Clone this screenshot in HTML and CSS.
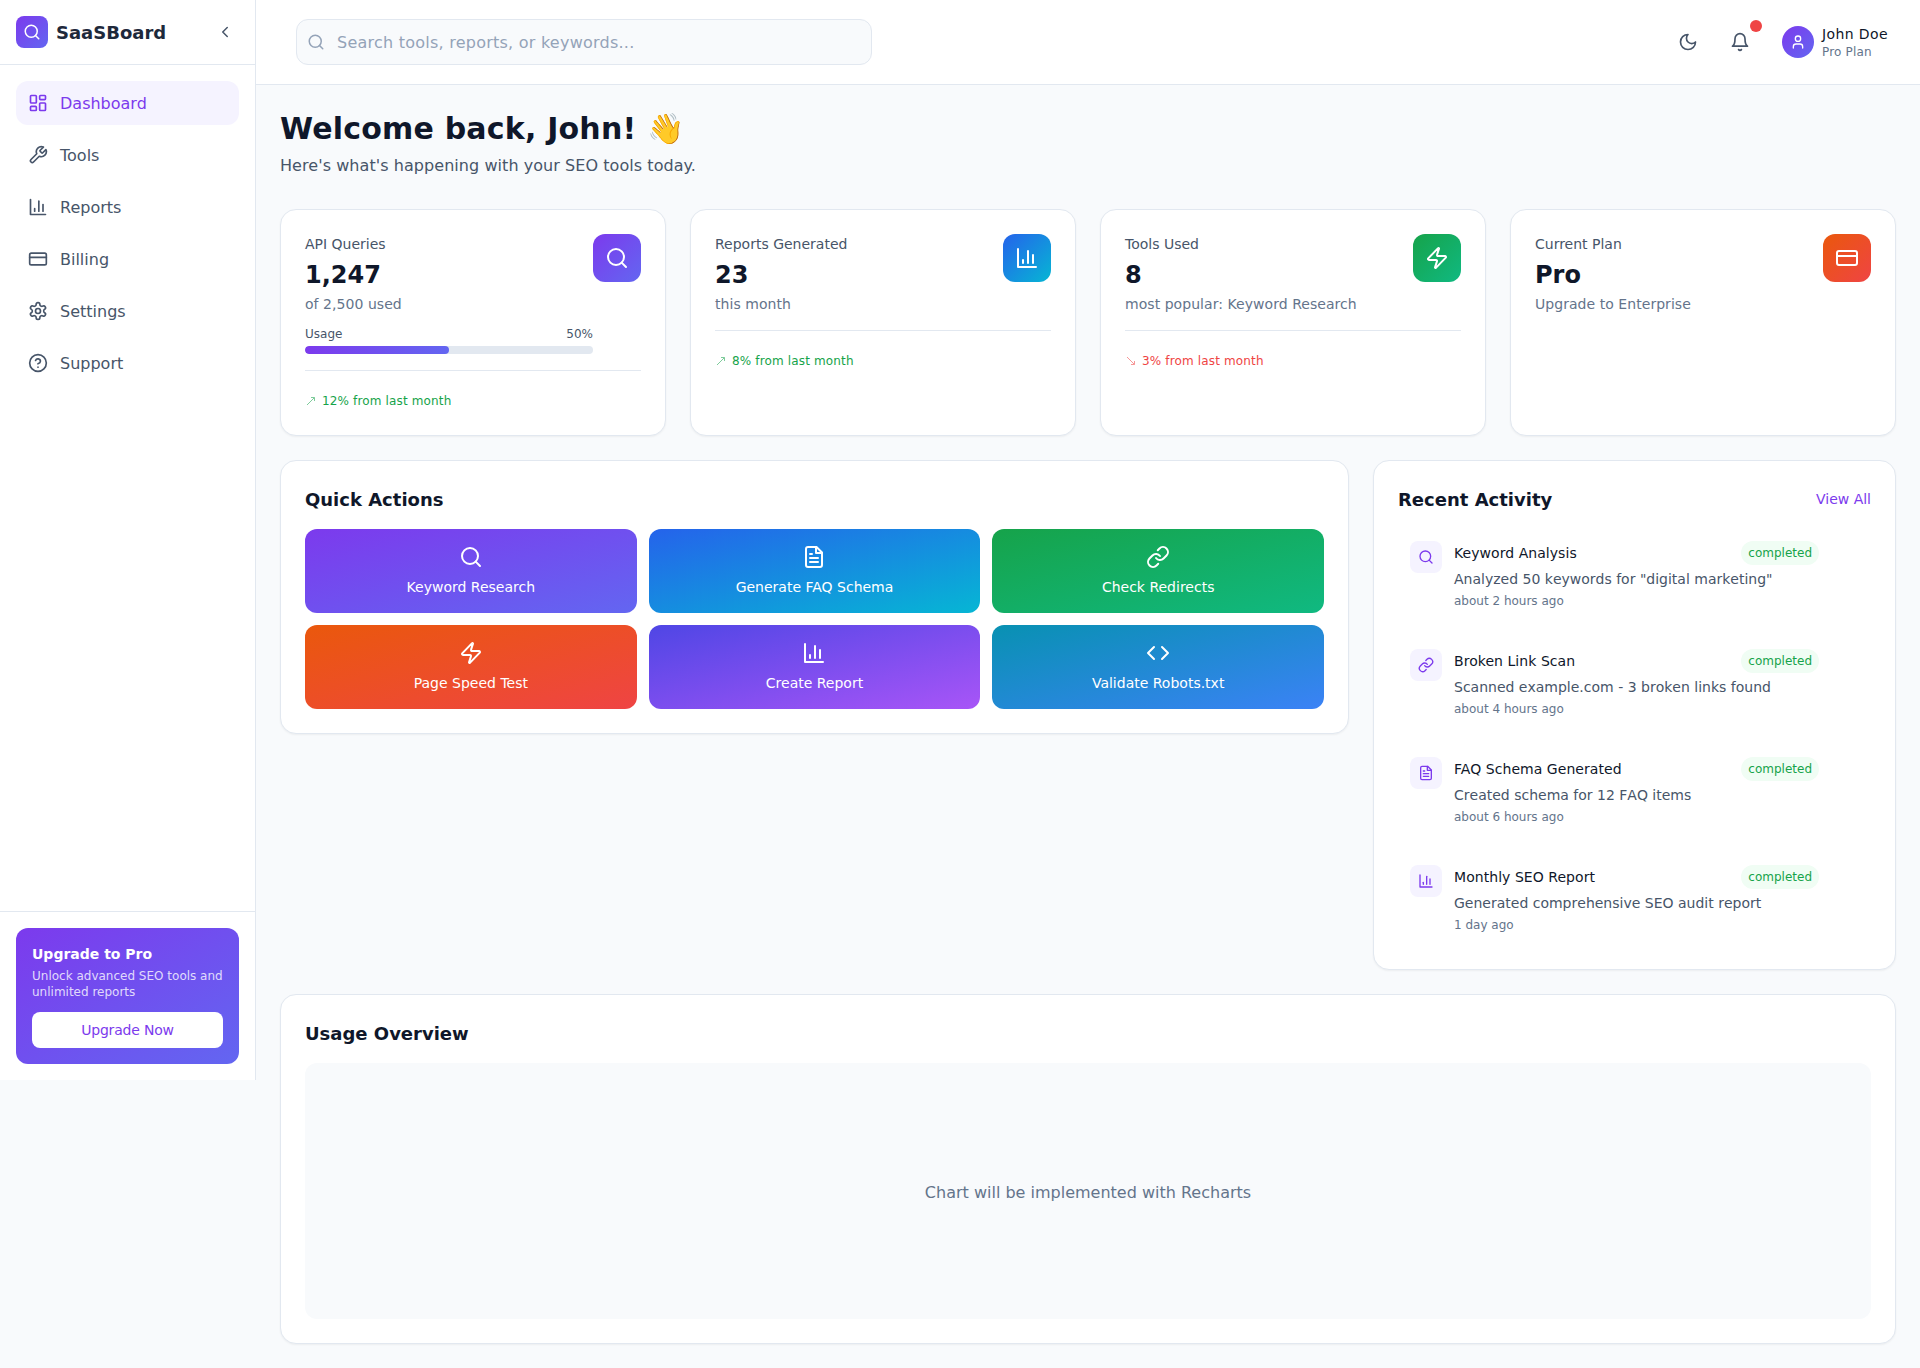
FILE: index.html
```html
<!DOCTYPE html>
<html lang="en">
<head>
    <meta charset="UTF-8">
    <title>SaaSBoard Dashboard</title>
    <link rel="stylesheet" href="styles.css">
</head>
<body>
    <svg class="sprite" xmlns="http://www.w3.org/2000/svg">
        <symbol id="i-search" viewBox="0 0 24 24"><circle cx="11" cy="11" r="8"/><path d="m21 21-4.35-4.35"/></symbol>
        <symbol id="i-chevron" viewBox="0 0 24 24"><path d="m15 18-6-6 6-6"/></symbol>
        <symbol id="i-dashboard" viewBox="0 0 24 24"><rect x="3" y="3" width="7" height="9" rx="1"/><rect x="14" y="3" width="7" height="5" rx="1"/><rect x="14" y="12" width="7" height="9" rx="1"/><rect x="3" y="16" width="7" height="5" rx="1"/></symbol>
        <symbol id="i-wrench" viewBox="0 0 24 24"><path d="M14.7 6.3a1 1 0 0 0 0 1.4l1.6 1.6a1 1 0 0 0 1.4 0l3.77-3.77a6 6 0 0 1-7.94 7.94l-6.91 6.91a2.12 2.12 0 0 1-3-3l6.91-6.91a6 6 0 0 1 7.94-7.94l-3.76 3.76z"/></symbol>
        <symbol id="i-chart" viewBox="0 0 24 24"><path d="M3 3v18h18"/><path d="M18 17V9"/><path d="M13 17V5"/><path d="M8 17v-3"/></symbol>
        <symbol id="i-card" viewBox="0 0 24 24"><rect x="2" y="5" width="20" height="14" rx="2"/><line x1="2" y1="10" x2="22" y2="10"/></symbol>
        <symbol id="i-settings" viewBox="0 0 24 24"><path d="M12.22 2h-.44a2 2 0 0 0-2 2v.18a2 2 0 0 1-1 1.73l-.43.25a2 2 0 0 1-2 0l-.15-.08a2 2 0 0 0-2.73.73l-.22.38a2 2 0 0 0 .73 2.73l.15.1a2 2 0 0 1 1 1.72v.51a2 2 0 0 1-1 1.74l-.15.09a2 2 0 0 0-.73 2.73l.22.38a2 2 0 0 0 2.73.73l.15-.08a2 2 0 0 1 2 0l.43.25a2 2 0 0 1 1 1.73V20a2 2 0 0 0 2 2h.44a2 2 0 0 0 2-2v-.18a2 2 0 0 1 1-1.73l.43-.25a2 2 0 0 1 2 0l.15.08a2 2 0 0 0 2.73-.73l.22-.39a2 2 0 0 0-.73-2.73l-.15-.08a2 2 0 0 1-1-1.74v-.5a2 2 0 0 1 1-1.74l.15-.09a2 2 0 0 0 .73-2.73l-.22-.38a2 2 0 0 0-2.73-.73l-.15.08a2 2 0 0 1-2 0l-.43-.25a2 2 0 0 1-1-1.73V4a2 2 0 0 0-2-2z"/><circle cx="12" cy="12" r="3"/></symbol>
        <symbol id="i-help" viewBox="0 0 24 24"><circle cx="12" cy="12" r="10"/><path d="M9.09 9a3 3 0 0 1 5.83 1c0 2-3 3-3 3"/><path d="M12 17h.01"/></symbol>
        <symbol id="i-moon" viewBox="0 0 24 24"><path d="M12 3a6 6 0 0 0 9 9 9 9 0 1 1-9-9Z"/></symbol>
        <symbol id="i-bell" viewBox="0 0 24 24"><path d="M6 8a6 6 0 0 1 12 0c0 7 3 9 3 9H3s3-2 3-9"/><path d="M10.3 21a1.94 1.94 0 0 0 3.4 0"/></symbol>
        <symbol id="i-user" viewBox="0 0 24 24"><path d="M19 21v-2a4 4 0 0 0-4-4H9a4 4 0 0 0-4 4v2"/><circle cx="12" cy="7" r="4"/></symbol>
        <symbol id="i-zap" viewBox="0 0 24 24"><path d="M4 14a1 1 0 0 1-.78-1.63l9.9-10.2a.5.5 0 0 1 .86.46l-1.92 6.02A1 1 0 0 0 13 10h7a1 1 0 0 1 .78 1.63l-9.9 10.2a.5.5 0 0 1-.86-.46l1.92-6.02A1 1 0 0 0 11 14z"/></symbol>
        <symbol id="i-file" viewBox="0 0 24 24"><path d="M14.5 2H6a2 2 0 0 0-2 2v16a2 2 0 0 0 2 2h12a2 2 0 0 0 2-2V7.5L14.5 2z"/><path d="M14 2v6h6"/><path d="M16 13H8"/><path d="M16 17H8"/><path d="M10 9H8"/></symbol>
        <symbol id="i-link" viewBox="0 0 24 24"><path d="M10 13a5 5 0 0 0 7.54.54l3-3a5 5 0 0 0-7.07-7.07l-1.72 1.71"/><path d="M14 11a5 5 0 0 0-7.54-.54l-3 3a5 5 0 0 0 7.07 7.07l1.71-1.71"/></symbol>
        <symbol id="i-code" viewBox="0 0 24 24"><path d="m16 18 6-6-6-6"/><path d="m8 6-6 6 6 6"/></symbol>
        <symbol id="i-trend-up" viewBox="0 0 10 10"><path d="M1 9 8.5 1.5"/><path d="M5 1.5h3.5V5"/></symbol>
        <symbol id="i-trend-down" viewBox="0 0 10 10"><path d="M1 1 8.5 8.5"/><path d="M8.5 5v3.5H5"/></symbol>
    </svg>

    <div class="app">
        <aside class="sidebar">
            <div class="sidebar-head">
                <div class="logo"><svg class="icon icon-18"><use href="#i-search"/></svg></div>
                <span class="brand">SaaSBoard</span>
                <button class="collapse-btn"><svg class="icon icon-18"><use href="#i-chevron"/></svg></button>
            </div>
            <nav class="nav">
                <a class="nav-item active" href="#"><svg class="icon icon-20"><use href="#i-dashboard"/></svg>Dashboard</a>
                <a class="nav-item" href="#"><svg class="icon icon-20"><use href="#i-wrench"/></svg>Tools</a>
                <a class="nav-item" href="#"><svg class="icon icon-20"><use href="#i-chart"/></svg>Reports</a>
                <a class="nav-item" href="#"><svg class="icon icon-20"><use href="#i-card"/></svg>Billing</a>
                <a class="nav-item" href="#"><svg class="icon icon-20"><use href="#i-settings"/></svg>Settings</a>
                <a class="nav-item" href="#"><svg class="icon icon-20"><use href="#i-help"/></svg>Support</a>
            </nav>
            <div class="upgrade-wrap">
                <div class="upgrade-card">
                    <h3 class="upgrade-title">Upgrade to Pro</h3>
                    <p class="upgrade-text">Unlock advanced SEO tools and unlimited reports</p>
                    <button class="upgrade-btn">Upgrade Now</button>
                </div>
            </div>
        </aside>

        <div class="content">
            <header class="topbar">
                <div class="search">
                    <svg class="icon icon-18 search-icon"><use href="#i-search"/></svg>
                    <input class="search-input" type="text" placeholder="Search tools, reports, or keywords...">
                </div>
                <div class="topbar-right">
                    <button class="top-btn"><svg class="icon icon-20"><use href="#i-moon"/></svg></button>
                    <button class="top-btn"><svg class="icon icon-20"><use href="#i-bell"/></svg><span class="notif-dot"></span></button>
                    <div class="user">
                        <div class="avatar"><svg class="icon icon-16"><use href="#i-user"/></svg></div>
                        <div>
                            <div class="user-name">John Doe</div>
                            <div class="user-plan">Pro Plan</div>
                        </div>
                    </div>
                </div>
            </header>

            <main class="main">
                <h1 class="welcome">Welcome back, John! 👋</h1>
                <p class="welcome-sub">Here's what's happening with your SEO tools today.</p>

                <section class="stats">
                    <div class="card stat">
                        <div class="stat-top">
                            <div class="stat-info">
                                <p class="stat-label">API Queries</p>
                                <p class="stat-value">1,247</p>
                                <p class="stat-sub">of 2,500 used</p>
                                <div class="usage-row"><span>Usage</span><span>50%</span></div>
                                <div class="usage-track"><div class="usage-fill" style="width: 50%"></div></div>
                            </div>
                            <div class="stat-icon grad-purple"><svg class="icon icon-24"><use href="#i-search"/></svg></div>
                        </div>
                        <p class="trend up"><svg class="trend-arrow"><use href="#i-trend-up"/></svg>12% from last month</p>
                    </div>
                    <div class="card stat">
                        <div class="stat-top">
                            <div class="stat-info">
                                <p class="stat-label">Reports Generated</p>
                                <p class="stat-value">23</p>
                                <p class="stat-sub">this month</p>
                            </div>
                            <div class="stat-icon grad-blue"><svg class="icon icon-24"><use href="#i-chart"/></svg></div>
                        </div>
                        <p class="trend up"><svg class="trend-arrow"><use href="#i-trend-up"/></svg>8% from last month</p>
                    </div>
                    <div class="card stat">
                        <div class="stat-top">
                            <div class="stat-info">
                                <p class="stat-label">Tools Used</p>
                                <p class="stat-value">8</p>
                                <p class="stat-sub">most popular: Keyword Research</p>
                            </div>
                            <div class="stat-icon grad-green"><svg class="icon icon-24"><use href="#i-zap"/></svg></div>
                        </div>
                        <p class="trend down"><svg class="trend-arrow"><use href="#i-trend-down"/></svg>3% from last month</p>
                    </div>
                    <div class="card stat">
                        <div class="stat-top">
                            <div class="stat-info">
                                <p class="stat-label">Current Plan</p>
                                <p class="stat-value">Pro</p>
                                <p class="stat-sub">Upgrade to Enterprise</p>
                            </div>
                            <div class="stat-icon grad-orange"><svg class="icon icon-24"><use href="#i-card"/></svg></div>
                        </div>
                    </div>
                </section>

                <section class="middle">
                    <div class="card panel quick">
                        <h2 class="panel-title">Quick Actions</h2>
                        <div class="quick-grid">
                            <button class="quick-btn grad-purple"><svg class="icon icon-24"><use href="#i-search"/></svg>Keyword Research</button>
                            <button class="quick-btn grad-blue"><svg class="icon icon-24"><use href="#i-file"/></svg>Generate FAQ Schema</button>
                            <button class="quick-btn grad-green"><svg class="icon icon-24"><use href="#i-link"/></svg>Check Redirects</button>
                            <button class="quick-btn grad-orange"><svg class="icon icon-24"><use href="#i-zap"/></svg>Page Speed Test</button>
                            <button class="quick-btn grad-indigo"><svg class="icon icon-24"><use href="#i-chart"/></svg>Create Report</button>
                            <button class="quick-btn grad-teal"><svg class="icon icon-24"><use href="#i-code"/></svg>Validate Robots.txt</button>
                        </div>
                    </div>

                    <div class="card panel">
                        <div class="panel-head">
                            <h2 class="panel-title">Recent Activity</h2>
                            <a class="view-all" href="#">View All</a>
                        </div>
                        <div class="activity-list">
                            <div class="activity">
                                <div class="activity-icon"><svg class="icon icon-16"><use href="#i-search"/></svg></div>
                                <div class="activity-body">
                                    <div class="activity-head"><span class="activity-title">Keyword Analysis</span><span class="badge">completed</span></div>
                                    <p class="activity-desc">Analyzed 50 keywords for "digital marketing"</p>
                                    <p class="activity-time">about 2 hours ago</p>
                                </div>
                            </div>
                            <div class="activity">
                                <div class="activity-icon"><svg class="icon icon-16"><use href="#i-link"/></svg></div>
                                <div class="activity-body">
                                    <div class="activity-head"><span class="activity-title">Broken Link Scan</span><span class="badge">completed</span></div>
                                    <p class="activity-desc">Scanned example.com - 3 broken links found</p>
                                    <p class="activity-time">about 4 hours ago</p>
                                </div>
                            </div>
                            <div class="activity">
                                <div class="activity-icon"><svg class="icon icon-16"><use href="#i-file"/></svg></div>
                                <div class="activity-body">
                                    <div class="activity-head"><span class="activity-title">FAQ Schema Generated</span><span class="badge">completed</span></div>
                                    <p class="activity-desc">Created schema for 12 FAQ items</p>
                                    <p class="activity-time">about 6 hours ago</p>
                                </div>
                            </div>
                            <div class="activity">
                                <div class="activity-icon"><svg class="icon icon-16"><use href="#i-chart"/></svg></div>
                                <div class="activity-body">
                                    <div class="activity-head"><span class="activity-title">Monthly SEO Report</span><span class="badge">completed</span></div>
                                    <p class="activity-desc">Generated comprehensive SEO audit report</p>
                                    <p class="activity-time">1 day ago</p>
                                </div>
                            </div>
                        </div>
                    </div>
                </section>

                <section class="card panel usage">
                    <h2 class="panel-title">Usage Overview</h2>
                    <div class="chart-box">Chart will be implemented with Recharts</div>
                </section>
            </main>
        </div>
    </div>
</body>
</html>
```

FILE: styles.css
```css
:root {
    --purple: #7c3aed;
    --ink: #0f172a;
    --slate: #475569;
    --muted: #64748b;
    --border: #e2e8f0;
    --page: #f8fafc;
    --white: #ffffff;
}

* {
    margin: 0;
    padding: 0;
    box-sizing: border-box;
}

body {
    font-family: "DejaVu Sans", sans-serif;
    background-color: var(--page);
    color: var(--ink);
}

button {
    font-family: inherit;
    border: none;
    background: none;
    cursor: pointer;
}

a {
    text-decoration: none;
}

.sprite {
    display: none;
}

.icon {
    display: block;
    flex-shrink: 0;
    fill: none;
    stroke: currentColor;
    stroke-width: 2;
    stroke-linecap: round;
    stroke-linejoin: round;
}

.icon-16 { width: 16px; height: 16px; }
.icon-18 { width: 18px; height: 18px; }
.icon-20 { width: 20px; height: 20px; }
.icon-24 { width: 24px; height: 24px; }

.grad-purple { background: linear-gradient(to bottom right, #7c3aed, #6366f1); }
.grad-blue { background: linear-gradient(to bottom right, #2563eb, #06b6d4); }
.grad-green { background: linear-gradient(to bottom right, #16a34a, #10b981); }
.grad-orange { background: linear-gradient(to bottom right, #ea580c, #ef4444); }
.grad-indigo { background: linear-gradient(to bottom right, #4f46e5, #a855f7); }
.grad-teal { background: linear-gradient(to bottom right, #0891b2, #3b82f6); }

.app {
    display: flex;
    align-items: flex-start;
}

/* sidebar */
.sidebar {
    width: 256px;
    height: 1080px;
    flex-shrink: 0;
    display: flex;
    flex-direction: column;
    background-color: var(--white);
    border-right: 1px solid var(--border);
}

.sidebar-head {
    display: flex;
    align-items: center;
    height: 65px;
    padding: 0 16px;
    border-bottom: 1px solid var(--border);
}

.logo {
    width: 32px;
    height: 32px;
    display: flex;
    align-items: center;
    justify-content: center;
    border-radius: 8px;
    color: var(--white);
    background: linear-gradient(to bottom right, #7c3aed, #6366f1);
}

.brand {
    margin-left: 8px;
    padding-top: 2px;
    font-size: 18px;
    line-height: 28px;
    font-weight: 700;
    color: #1e293b;
}

.collapse-btn {
    margin-left: auto;
    padding: 5px;
    color: var(--slate);
}

.nav {
    flex: 1;
    padding: 16px;
    display: flex;
    flex-direction: column;
    gap: 8px;
}

.nav-item {
    display: flex;
    align-items: center;
    gap: 12px;
    padding: 10px 12px 8px;
    border-radius: 12px;
    font-size: 16px;
    line-height: 26px;
    color: var(--slate);
}

.nav-item .icon {
    margin-bottom: 2px;
}

.nav-item.active {
    background-color: #f5f3ff;
    color: var(--purple);
}

.upgrade-wrap {
    padding: 16px;
    border-top: 1px solid var(--border);
}

.upgrade-card {
    padding: 16px;
    border-radius: 12px;
    color: var(--white);
    background: linear-gradient(to bottom right, #7c3aed, #6366f1);
}

.upgrade-title {
    font-size: 14px;
    line-height: 20px;
    font-weight: 700;
    margin-bottom: 4px;
}

.upgrade-text {
    font-size: 12px;
    line-height: 16px;
    color: rgba(255, 255, 255, 0.8);
    margin-bottom: 12px;
}

.upgrade-btn {
    width: 100%;
    padding: 8px;
    border-radius: 8px;
    font-size: 14px;
    line-height: 20px;
    letter-spacing: -0.2px;
    color: var(--purple);
    background-color: var(--white);
}

/* top bar */
.content {
    flex: 1;
    min-width: 0;
}

.topbar {
    display: flex;
    align-items: center;
    justify-content: space-between;
    height: 85px;
    padding: 0 32px 0 40px;
    background-color: var(--white);
    border-bottom: 1px solid var(--border);
}

.search {
    position: relative;
    width: 576px;
}

.search-icon {
    position: absolute;
    left: 11px;
    top: 14px;
    color: #94a3b8;
}

.search-input {
    display: block;
    width: 100%;
    padding: 11px 16px 9px 40px;
    font-family: inherit;
    font-size: 16px;
    line-height: 24px;
    letter-spacing: 0.24px;
    color: var(--ink);
    background-color: var(--page);
    border: 1px solid var(--border);
    border-radius: 12px;
}

.search-input::placeholder {
    color: #94a3b8;
    opacity: 1;
}

.topbar-right {
    display: flex;
    align-items: center;
    gap: 16px;
}

.top-btn {
    position: relative;
    padding: 8px;
    color: var(--slate);
}

.notif-dot {
    position: absolute;
    top: -4px;
    right: -4px;
    width: 12px;
    height: 12px;
    border-radius: 50%;
    background-color: #ef4444;
}

.user {
    display: flex;
    align-items: center;
    gap: 8px;
    margin-left: 8px;
}

.avatar {
    width: 32px;
    height: 32px;
    display: flex;
    align-items: center;
    justify-content: center;
    border-radius: 50%;
    color: var(--white);
    background: linear-gradient(to bottom right, #7c3aed, #6366f1);
}

.user-name {
    font-size: 14px;
    line-height: 20px;
    letter-spacing: 0.4px;
}

.user-plan {
    font-size: 12px;
    line-height: 16px;
    letter-spacing: 0.2px;
    color: var(--muted);
}

/* main */
.main {
    padding: 24px;
}

.welcome {
    font-size: 30px;
    line-height: 40px;
    font-weight: 700;
    letter-spacing: 0.2px;
}

.welcome-sub {
    margin-top: 5px;
    font-size: 16px;
    line-height: 24px;
    letter-spacing: 0.06px;
    color: var(--slate);
}

.card {
    background-color: var(--white);
    border: 1px solid var(--border);
    border-radius: 16px;
    box-shadow: 0 1px 2px rgba(0, 0, 0, 0.05);
}

.stats {
    display: grid;
    grid-template-columns: repeat(4, minmax(0, 1fr));
    gap: 24px;
    margin-top: 31px;
}

.stat {
    padding: 24px;
}

.stat-top {
    display: flex;
    align-items: flex-start;
}

.stat-info {
    flex: 1;
    min-width: 0;
}

.stat-label {
    font-size: 14px;
    line-height: 20px;
    color: var(--slate);
}

.stat-value {
    margin-top: 4px;
    font-size: 24px;
    line-height: 34px;
    font-weight: 700;
}

.stat-sub {
    margin-top: 2px;
    font-size: 14px;
    line-height: 20px;
    letter-spacing: 0.05px;
    color: var(--muted);
}

.stat-icon {
    width: 48px;
    height: 48px;
    flex-shrink: 0;
    display: flex;
    align-items: center;
    justify-content: center;
    border-radius: 12px;
    color: var(--white);
}

.usage-row {
    display: flex;
    justify-content: space-between;
    margin-top: 12px;
    font-size: 12px;
    line-height: 16px;
    color: var(--slate);
}

.usage-track {
    height: 8px;
    margin-top: 4px;
    border-radius: 999px;
    background-color: var(--border);
    overflow: hidden;
}

.usage-fill {
    height: 100%;
    border-radius: 999px;
    background: linear-gradient(90deg, #7c3aed, #6366f1);
}

.trend {
    display: flex;
    align-items: center;
    margin-top: 16px;
    padding-top: 20px;
    border-top: 1px solid var(--border);
    font-size: 12px;
    line-height: 20px;
    letter-spacing: 0.15px;
}

.trend.up { color: #16a34a; }
.trend.down { color: #ef4444; }

.trend-arrow {
    width: 10px;
    height: 10px;
    margin: 0 6px 0 1px;
    fill: none;
    stroke: currentColor;
    stroke-width: 1;
    opacity: 0.55;
}

.middle {
    display: grid;
    grid-template-columns: minmax(0, 1fr) 523px;
    align-items: start;
    gap: 24px;
    margin-top: 24px;
}

.panel {
    padding: 24px;
}

.panel-title {
    font-size: 18px;
    line-height: 30px;
    font-weight: 700;
}

.quick-grid {
    display: grid;
    grid-template-columns: repeat(3, minmax(0, 1fr));
    gap: 12px;
    margin-top: 14px;
}

.quick-btn {
    display: flex;
    flex-direction: column;
    align-items: center;
    gap: 8px;
    padding: 16px;
    border-radius: 12px;
    font-size: 14px;
    line-height: 20px;
    color: var(--white);
}

.panel-head {
    display: flex;
    align-items: flex-start;
    justify-content: space-between;
}

.view-all {
    margin-top: 4px;
    font-size: 14px;
    line-height: 20px;
    color: var(--purple);
}

.activity-list {
    display: flex;
    flex-direction: column;
    gap: 16px;
    margin-top: 14px;
}

.activity {
    display: flex;
    gap: 12px;
    padding: 12px 52px 12px 12px;
}

.activity-icon {
    width: 32px;
    height: 32px;
    flex-shrink: 0;
    display: flex;
    align-items: center;
    justify-content: center;
    border-radius: 8px;
    color: var(--purple);
    background-color: #f5f3ff;
}

.activity-body {
    flex: 1;
    min-width: 0;
}

.activity-head {
    display: flex;
    align-items: center;
    justify-content: space-between;
}

.activity-title {
    font-size: 14px;
    line-height: 20px;
    letter-spacing: 0.05px;
}

.badge {
    padding: 4px 7px;
    border-radius: 999px;
    font-size: 12px;
    line-height: 16px;
    color: #16a34a;
    background-color: #f0fdf4;
}

.activity-desc {
    margin-top: 4px;
    font-size: 14px;
    line-height: 20px;
    font-kerning: none;
    color: var(--slate);
}

.activity-time {
    margin-top: 4px;
    font-size: 12px;
    line-height: 16px;
    color: var(--muted);
}

.usage {
    margin-top: 24px;
}

.chart-box {
    height: 256px;
    margin-top: 14px;
    padding-top: 2px;
    display: flex;
    align-items: center;
    justify-content: center;
    border-radius: 12px;
    font-size: 16px;
    color: var(--muted);
    background-color: var(--page);
}
```
